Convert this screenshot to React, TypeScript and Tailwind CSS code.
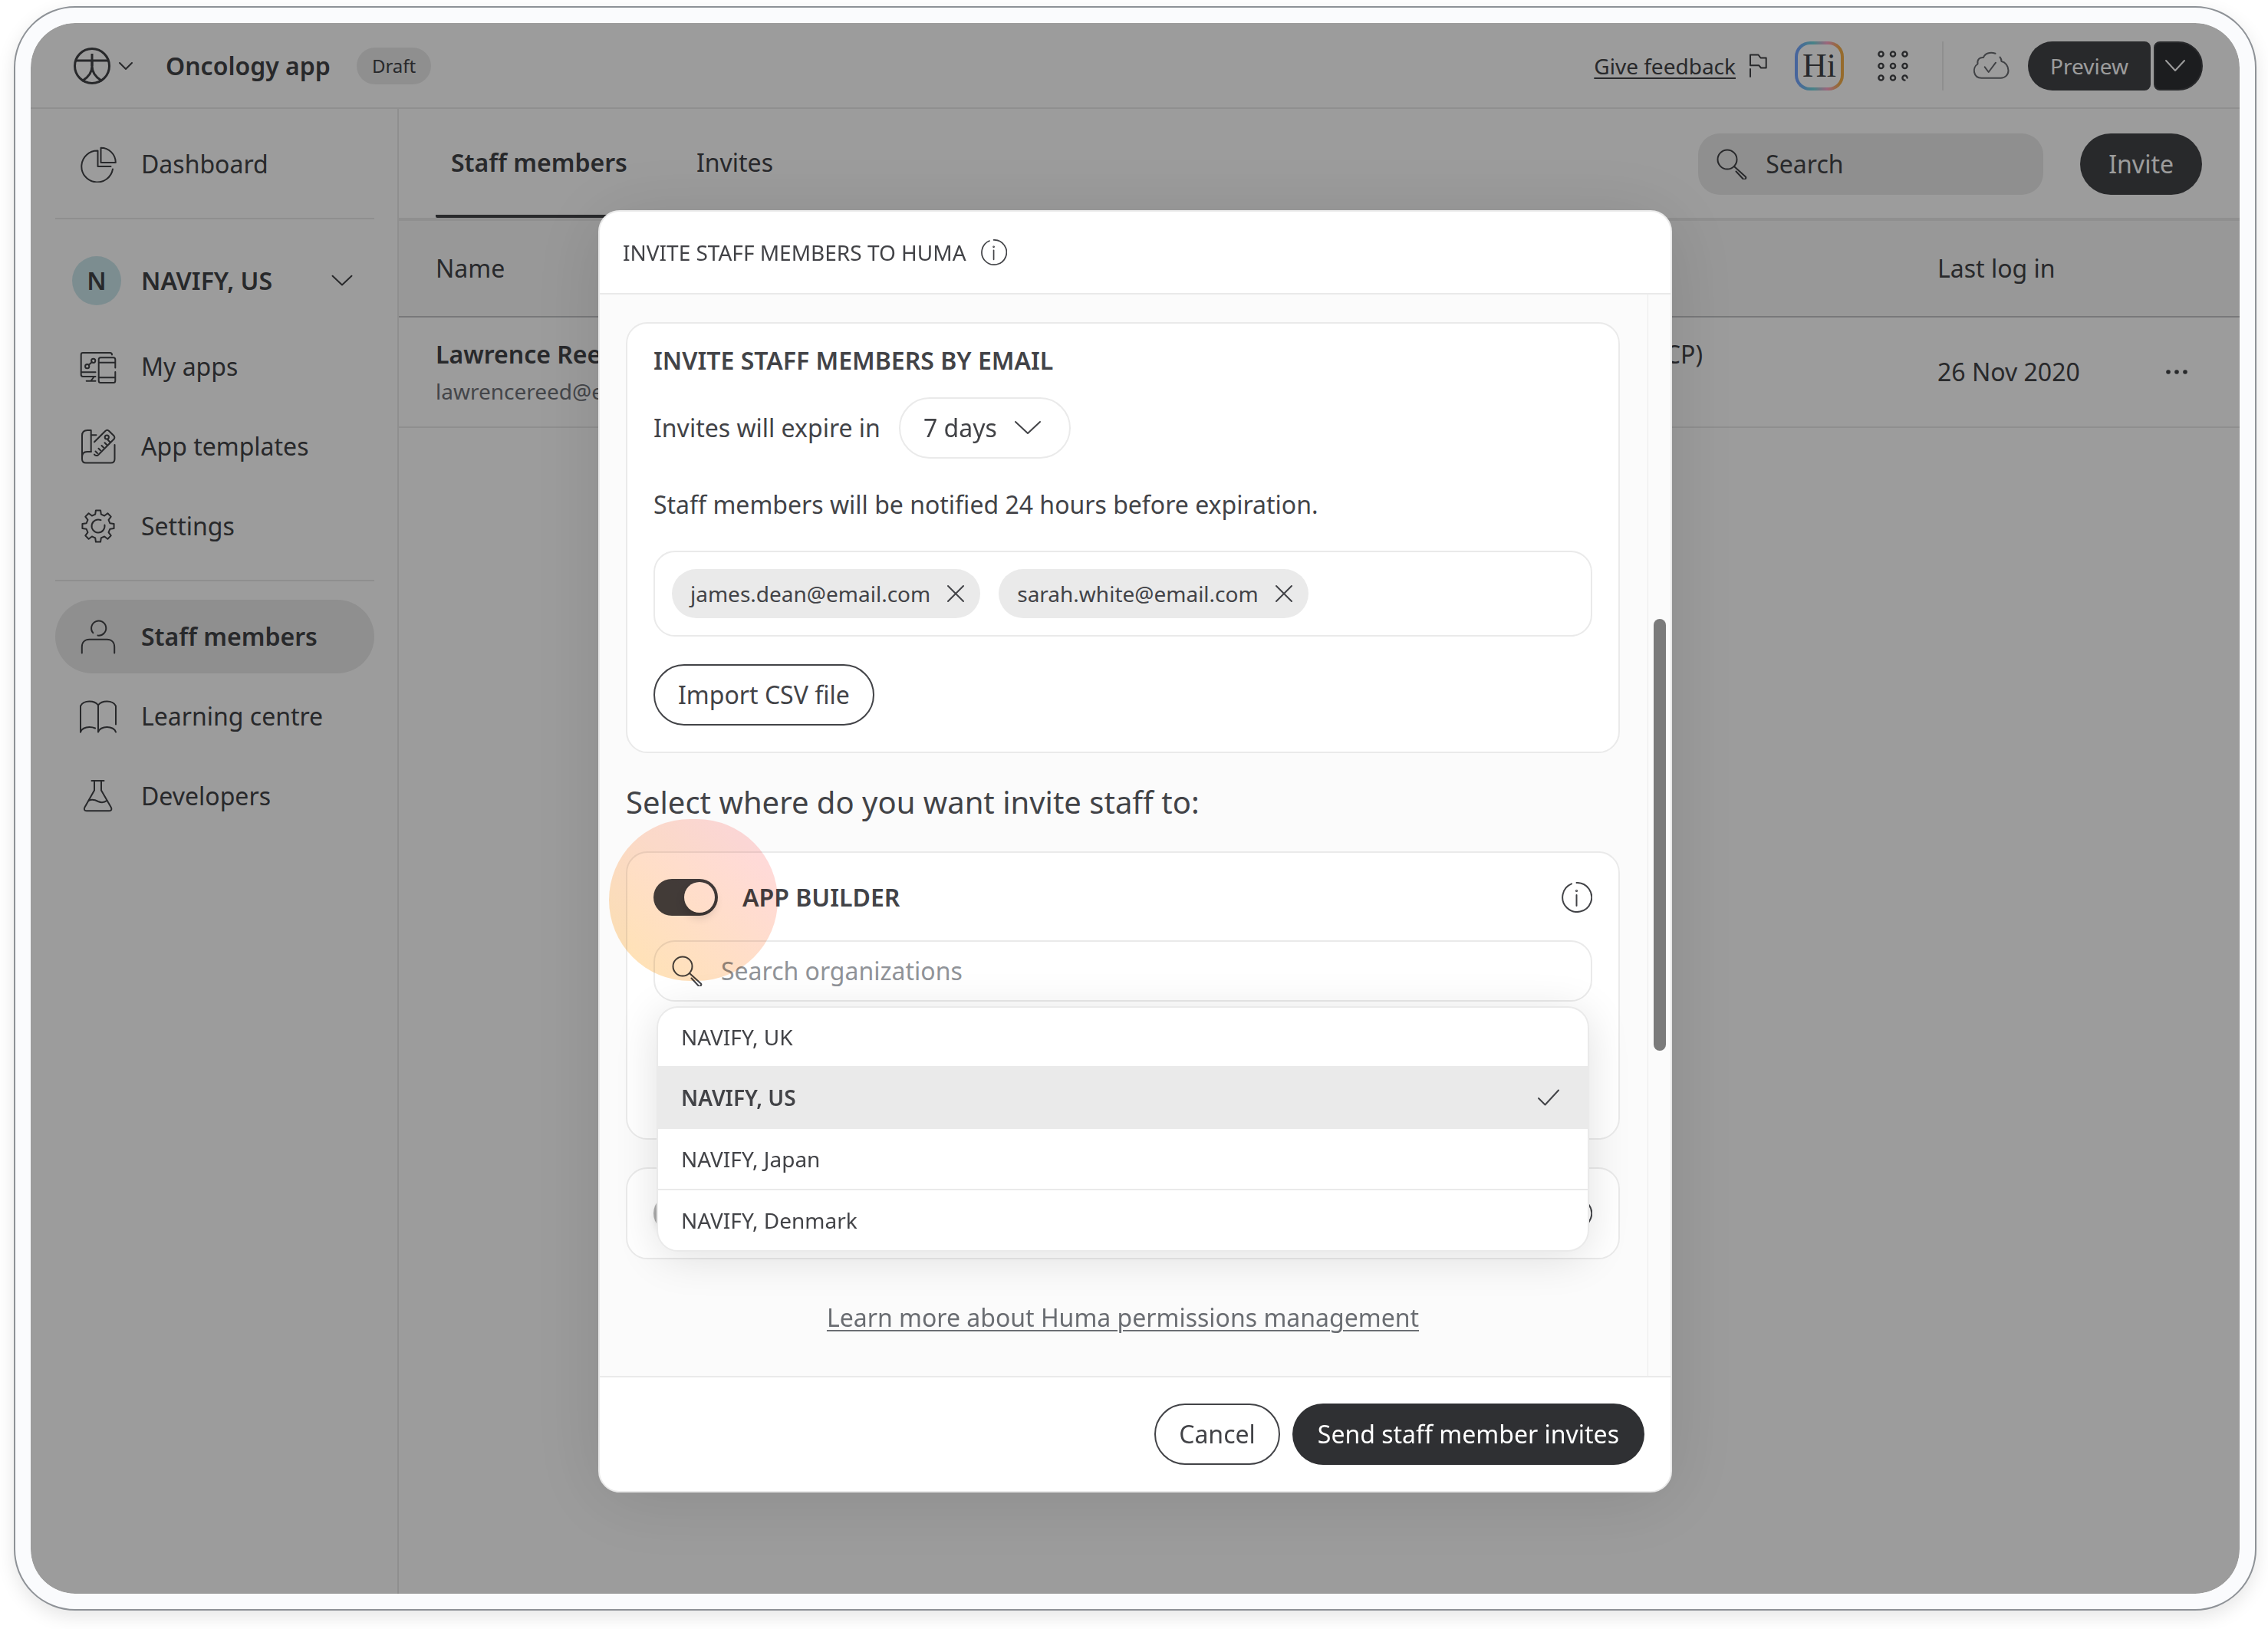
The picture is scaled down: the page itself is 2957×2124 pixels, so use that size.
import { useState, type ReactNode } from "react";

type IconProps = { className?: string };

function Svg({ size, className = "", w = 2, children, height }: { size: number; height?: number; className?: string; w?: number; children: ReactNode }) {
  return (
    <svg
      width={size}
      height={height ?? size}
      viewBox={`0 0 ${size} ${height ?? size}`}
      fill="none"
      stroke="currentColor"
      strokeWidth={w}
      strokeLinecap="round"
      strokeLinejoin="round"
      aria-hidden="true"
      className={`shrink-0 ${className}`}
    >
      {children}
    </svg>
  );
}

const LogoIcon = () => (
  <Svg size={48} w={3}>
    <circle cx="24" cy="24" r="22.5" />
    <path d="M24 8V24M3 17H45" strokeLinecap="butt" />
    <path d="M24 17V24C24 31 20 38 12 43M24 24C24 31 28 38 36 43" />
  </Svg>
);

const Chevron = ({ className }: IconProps) => (
  <Svg size={36} height={20} className={className}>
    <path d="M2 2L18 17L34 2" vectorEffect="non-scaling-stroke" />
  </Svg>
);

const SmallChevron = () => (
  <Svg size={20} height={12}>
    <path d="M2 2L10 10L18 2" />
  </Svg>
);

const PreviewChevron = () => (
  <Svg size={28} height={18}>
    <path d="M2 2L14 15L26 2" />
  </Svg>
);

const SearchIcon = ({ className }: IconProps) => (
  <Svg size={40} className={className}>
    <circle cx="14" cy="14" r="12.5" />
    <path d="M23 23L37.6 36.2A2.1 2.1 0 0 1 34.6 39.2L25.5 29.5" />
  </Svg>
);

const InfoIcon = ({ small = false }: { small?: boolean }) => (
  <svg
    width={small ? 34 : 40}
    height={small ? 34 : 40}
    viewBox="0 0 40 40"
    fill="none"
    stroke="currentColor"
    strokeWidth="2"
    strokeLinecap="round"
    aria-hidden="true"
  >
    <path d="M19.5 1A19 19 0 1 1 13 2.4" />
    <path d="M19.5 17V31" />
    <circle cx="19.5" cy="11.5" r="0.6" />
  </svg>
);

const DashboardIcon = () => (
  <Svg size={48}>
    <path d="M40.5 27H23.5V6.5A20.5 20.5 0 1 0 43 30.5" />
    <path d="M27.5 22V2.7A19.3 19.3 0 0 1 46.8 22Z" />
  </Svg>
);

const AppsIcon = () => (
  <Svg size={48}>
    <path d="M42 8.5C42 7 41 6 39.5 6H4C2.6 6 1.7 7 1.7 8.4V34.6C1.7 36 2.6 37 4 37H20.5M1.7 31.3H20.5M8.7 42.7H20.5M18.5 37.5L14.5 42.5" />
    <path d="M46.3 25.5V14.8C46.3 13.4 45.3 12.3 44 12.3H27C25.7 12.3 24.7 13.4 24.7 14.8V42.5C24.7 44 25.7 45 27 45H44C45.3 45 46.3 44 46.3 42.5V31M24.7 18.7H46.3M24.7 38.3H46.3" />
    <circle cx="9.7" cy="23.7" r="2.6" />
    <circle cx="17.7" cy="16.3" r="2.6" />
    <path d="M11.8 21.8L15.7 18.2" />
  </Svg>
);

const TemplatesIcon = () => (
  <Svg size={48}>
    <path d="M14.7 31V3H10C5.6 3 3 5.6 3 10V40.5C3 43.5 5 45.5 8 45.5H40.5C43.5 45.5 45.5 43.5 45.5 40.5V22" />
    <path d="M14.7 31H9.5C5.5 31 3 33.5 3 38M14.7 9.3H21.5" />
    <path d="M19 18.3L33.3 4C34.7 2.6 36.8 2.6 38.2 4L44.3 10C45.7 11.4 45.7 13.4 44.3 14.8L24 35.2C22.4 36.6 20.4 36.4 19 34.6" />
    <circle cx="35.3" cy="12" r="2.6" />
    <path d="M20.5 30.5L23 33M24.5 26.8L27 29.3M28.5 23L31 25.5M32.5 19.2L35 21.7M36.8 15.8L39.3 18.3" />
  </Svg>
);

const gearPath = (() => {
  const points: string[] = [];
  for (let i = 0; i < 8; i++) {
    const base = i * 45 - 90;
    const corners: [number, number][] = [
      [-14, 15.8],
      [-8.5, 20.8],
      [8.5, 20.8],
      [14, 15.8],
    ];
    corners.forEach(([offset, radius]) => {
      const angle = ((base + offset) * Math.PI) / 180;
      points.push(`${(24 + radius * Math.cos(angle)).toFixed(2)} ${(24 + radius * Math.sin(angle)).toFixed(2)}`);
    });
  }
  return `M${points.join("L")}Z`;
})();

const GearIcon = () => (
  <Svg size={48}>
    <path d={gearPath} />
    <path d="M27.5 16.2A8.5 8.5 0 1 0 32.4 22.5" />
  </Svg>
);

const PersonIcon = () => (
  <Svg size={48}>
    <path d="M17.3 19.2A9.6 9.6 0 1 1 23.5 22.6" />
    <path d="M2.8 45.5V37.5C2.8 31.5 6.5 27.8 12.5 27.8H35.5C41.5 27.8 45.2 31.5 45.2 37.5V45.5" />
  </Svg>
);

const BookIcon = () => (
  <Svg size={48}>
    <path d="M1 44.5V10.5C3 6.5 7.5 4.5 12.5 4.5C17.5 4.5 21.5 6 24 9.5C26.5 6 30.5 4.5 35.5 4.5C40.5 4.5 45 6.5 47 10.5V34.5" />
    <path d="M24 9.5V44.5M1 44.5C2 40.5 7 38 12.5 38C15.5 38 18 38.5 20 39.5M24 44.5C25 40.5 30 38 35.5 38C41 38 46 40.5 47 44.5" />
  </Svg>
);

const FlaskIcon = () => (
  <Svg size={48}>
    <path d="M15.5 4H31.5M19 4V16.5L6.5 38.5C5 41 6 43.3 9 43.3H38.5C41.3 43.3 42.2 41 40.7 38.5L28 16.5V4" />
    <path d="M11.8 30C16 27.5 20 29 24 31C28 32.8 32 32.5 35.5 29.8" />
  </Svg>
);

const FlagIcon = () => (
  <Svg size={28} height={34}>
    <path d="M4 16.3V2.5H14.5L17.5 6.5H24.7V19.5H18L15.3 16.3H4M4 21V31" />
  </Svg>
);

const GridIcon = () => (
  <Svg size={40} w={2.4}>
    {[4.5, 20, 35.5].map((y) =>
      [4.5, 20, 35.5].map((x) =>
        x === 35.5 && y === 35.5 ? (
          <path key="open" d="M35.5 38.6A3.1 3.1 0 1 1 38.6 35.5" />
        ) : (
          <circle key={`${x}-${y}`} cx={x} cy={y} r="3.1" />
        ),
      ),
    )}
  </Svg>
);

const CloudIcon = () => (
  <Svg size={48}>
    <path d="M29.5 7.8C22.5 5 15.5 8 14 13C9 12.3 5.5 16 6.5 21.5C-1 26 .5 39.7 11.5 39.7H36.5C42.5 39.7 46.5 35.5 46.5 30C46.5 24 42.5 19 37.5 18C37.5 16 36.8 14 35.5 12.5" />
    <path d="M15.7 25.3L20.7 32L30 19.7" />
  </Svg>
);

const CloseIcon = () => (
  <Svg size={24}>
    <path d="M2 2L22 22M22 2L2 22" />
  </Svg>
);

const CheckIcon = () => (
  <Svg size={32} height={24}>
    <path d="M2 13L10.5 21.5L28 2.5" />
  </Svg>
);

const DotsIcon = () => (
  <svg width="28" height="8" viewBox="0 0 28 8" fill="currentColor" aria-hidden="true">
    <circle cx="3" cy="4" r="2.8" />
    <circle cx="14" cy="4" r="2.8" />
    <circle cx="25" cy="4" r="2.8" />
  </svg>
);

function NavItem({ icon, label, active = false }: { icon: ReactNode; label: string; active?: boolean }) {
  return (
    <a
      href="#"
      aria-current={active ? "page" : undefined}
      className={`flex h-24 items-center gap-8 rounded-full pl-8 ${active ? "bg-[#eaeaea] font-semibold" : ""}`}
    >
      {icon}
      {label}
    </a>
  );
}

function Sidebar() {
  return (
    <nav className="w-[480px] shrink-0 border-r-2 border-[#eaeaea] pt-6 pr-[30px] pl-8">
      <NavItem icon={<DashboardIcon />} label="Dashboard" />
      <hr className="mt-[22px] mb-6 border-t-2 border-[#eaeaea]" />
      <button className="mb-2 flex h-28 w-full items-center pr-7 pl-[22px] font-semibold">
        <span className="mr-[26px] flex size-16 items-center justify-center rounded-full bg-[#cbe7ec]">N</span>
        NAVIFY, US
        <Chevron className="ml-auto h-4 w-7" />
      </button>
      <div className="flex flex-col gap-2">
        <NavItem icon={<AppsIcon />} label="My apps" />
        <NavItem icon={<TemplatesIcon />} label="App templates" />
        <NavItem icon={<GearIcon />} label="Settings" />
      </div>
      <hr className="mt-[22px] mb-6 border-t-2 border-[#eaeaea]" />
      <div className="flex flex-col gap-2">
        <NavItem icon={<PersonIcon />} label="Staff members" active />
        <NavItem icon={<BookIcon />} label="Learning centre" />
        <NavItem icon={<FlaskIcon />} label="Developers" />
      </div>
    </nav>
  );
}

function Header() {
  return (
    <header className="flex h-28 items-center border-b-2 border-[#eaeaea] pt-0.5 pr-12 pl-14">
      <button aria-label="Switch workspace" className="flex items-center gap-2.5">
        <LogoIcon />
        <SmallChevron />
      </button>
      <h1 className="ml-[42px] font-semibold">Oncology app</h1>
      <span className="ml-[34px] flex h-12 items-center rounded-full bg-[#eaeaea] px-5 text-2xl">Draft</span>
      <a href="#" className="ml-auto flex items-center gap-[15px] text-[28px]">
        <span className="underline decoration-2 underline-offset-4">Give feedback</span>
        <FlagIcon />
      </a>
      <button
        aria-label="Huma intelligence"
        className="ml-[34px] size-16 rounded-[20px] bg-[linear-gradient(90deg,#75a5ff_5%,#74d6dc_38%,#ffa6cb_66%,#f5b04a_92%)] p-1"
      >
        <span className="flex size-full items-center justify-center rounded-2xl bg-white font-['Liberation_Serif',serif] text-[44px]">
          Hi
        </span>
      </button>
      <button aria-label="Apps" className="ml-11">
        <GridIcon />
      </button>
      <span className="ml-11 h-16 w-0.5 bg-[#eaeaea]" />
      <span className="ml-[38px] text-[#6a6d72]">
        <CloudIcon />
      </span>
      <button className="ml-6 h-16 w-40 rounded-l-[32px] rounded-r-lg bg-[#424347] text-[28px] text-white">Preview</button>
      <button
        aria-label="Preview options"
        className="ml-1 flex size-16 items-center justify-center rounded-l-lg rounded-r-[32px] border-2 border-[#424347] bg-[#2f3033] pr-2 text-white"
      >
        <PreviewChevron />
      </button>
    </header>
  );
}

function StaffPage() {
  return (
    <main className="min-w-0 flex-1">
      <div className="flex h-[146px] items-center border-b-4 border-[#eaeaea] pt-0.5 pr-[49px] pl-12">
        <div role="tablist" className="flex h-full gap-[50px]">
          <button role="tab" aria-selected="true" className="h-full rounded-b-xs border-b-4 border-[#424347] px-5 font-semibold">
            Staff members
          </button>
          <button role="tab" aria-selected="false" className="h-full border-b-4 border-transparent px-5">
            Invites
          </button>
        </div>
        <label className="ml-auto flex h-20 w-[450px] items-center gap-6 rounded-[28px] bg-[#eaeaea] pl-6">
          <SearchIcon />
          <input
            type="search"
            aria-label="Search staff members"
            placeholder="Search"
            className="min-w-0 flex-1 bg-transparent outline-none placeholder:text-[#424347]"
          />
        </label>
        <button className="ml-12 h-20 rounded-full bg-[#424347] px-[37px] text-white">Invite</button>
      </div>
      <table className="w-full table-fixed text-left">
        <colgroup>
          <col className="w-[900px]" />
          <col />
          <col className="w-[230px]" />
          <col className="w-[164px]" />
        </colgroup>
        <thead>
          <tr className="h-[125px] border-b-2 border-[#c4c5c8] bg-[#f8f8f8]">
            <th scope="col" className="pl-12 font-normal">Name</th>
            <th scope="col" className="font-normal" />
            <th scope="col" className="font-normal">Last log in</th>
            <th scope="col" />
          </tr>
        </thead>
        <tbody>
          <tr className="border-b-2 border-[#eaeaea]">
            <td className="pt-6 pb-[22px] pl-12">
              <div className="font-semibold">Lawrence Reed</div>
              <div className="text-[28px] leading-[48px] text-[#6f7278]">lawrencereed@email.com</div>
            </td>
            <td className="pt-6 pr-[306px] text-right align-top">Healthcare professional (HCP)</td>
            <td>26 Nov 2020</td>
            <td>
              <button aria-label="More actions" className="mx-auto flex">
                <DotsIcon />
              </button>
            </td>
          </tr>
        </tbody>
      </table>
    </main>
  );
}

function Chip({ email, onRemove }: { email: string; onRemove: () => void }) {
  return (
    <span className="flex h-16 items-center gap-[21px] rounded-full bg-[#eaeaea] pr-5 pl-6 text-[28px]">
      {email}
      <button aria-label={`Remove ${email}`} onClick={onRemove}>
        <CloseIcon />
      </button>
    </span>
  );
}

const toggleClass =
  "flex h-12 w-[84px] appearance-none items-center rounded-full bg-[#b4b4b4] p-1 before:size-10 before:rounded-full before:bg-white before:shadow-[0_6px_12px_rgba(0,0,0,0.16)] checked:justify-end checked:bg-[#424347]";

const organizations = ["NAVIFY, UK", "NAVIFY, US", "NAVIFY, Japan", "NAVIFY, Denmark"];

function InviteDialog() {
  const [emails, setEmails] = useState(["james.dean@email.com", "sarah.white@email.com"]);
  const [builder, setBuilder] = useState(true);
  const [portal, setPortal] = useState(false);
  const [selected, setSelected] = useState("NAVIFY, US");

  return (
    <section
      role="dialog"
      aria-modal="true"
      aria-labelledby="dialog-title"
      className="flex w-[1400px] max-w-full flex-col overflow-hidden rounded-[28px] border-2 border-[#eaeaea] bg-white shadow-[0_8px_100px_rgba(0,0,0,0.12)]"
    >
      <header className="flex h-[108px] items-center gap-[19px] border-b-2 border-[#eaeaea] px-[30px]">
        <h2 id="dialog-title" className="text-[28px]">INVITE STAFF MEMBERS TO HUMA</h2>
        <button aria-label="About invitations">
          <InfoIcon small />
        </button>
      </header>

      <div className="flex bg-[#fbfbfb]">
        <div className="min-w-0 flex-1 pt-9 pr-9 pl-[34px]">
          <div className="rounded-[28px] border-2 border-[#eaeaea] bg-white px-[34px] pt-6 pb-[34px]">
            <h3 className="font-semibold">INVITE STAFF MEMBERS BY EMAIL</h3>
            <div className="mt-6 flex items-center gap-6">
              <label htmlFor="expiry">Invites will expire in</label>
              <div className="relative">
                <select id="expiry" className="h-20 w-56 appearance-none rounded-full border-2 border-[#eaeaea] bg-white pl-[30px]">
                  <option>7 days</option>
                  <option>14 days</option>
                  <option>30 days</option>
                </select>
                <Chevron className="pointer-events-none absolute top-[30px] right-[38px]" />
              </div>
            </div>
            <p className="mt-9">Staff members will be notified 24 hours before expiration.</p>
            <div className="mt-9 flex h-28 items-center gap-6 rounded-[28px] border-2 border-[#eaeaea] px-[22px]">
              {emails.map((email) => (
                <Chip key={email} email={email} onRemove={() => setEmails(emails.filter((e) => e !== email))} />
              ))}
              <input type="email" aria-label="Add an email address" className="h-16 min-w-0 flex-1 outline-none" />
            </div>
            <button className="mt-9 h-20 rounded-full border-2 border-[#424347] px-[30px]">Import CSV file</button>
          </div>

          <h3 className="my-9 text-[40px] leading-[56px]">Select where do you want invite staff to:</h3>

          <div className="relative rounded-[28px] border-2 border-[#eaeaea] bg-white px-[34px] pt-[34px] pb-[178px]">
            <div className="flex h-12 items-center justify-between">
              <label className="flex items-center gap-8 font-semibold">
                <input
                  type="checkbox"
                  role="switch"
                  checked={builder}
                  onChange={() => setBuilder(!builder)}
                  className={toggleClass}
                />
                APP BUILDER
              </label>
              <button aria-label="About App Builder">
                <InfoIcon />
              </button>
            </div>
            <div className="relative mt-8">
              <label className="flex h-20 items-center gap-6 rounded-[28px] border-2 border-[#eaeaea] px-[22px]">
                <SearchIcon />
                <input
                  type="text"
                  role="combobox"
                  aria-expanded="true"
                  aria-controls="organizations"
                  aria-label="Search organizations"
                  placeholder="Search organizations"
                  className="min-w-0 flex-1 bg-transparent outline-none placeholder:text-[#909398]"
                />
              </label>
              <ul
                id="organizations"
                role="listbox"
                aria-label="Organizations"
                className="absolute top-full right-1 left-1 z-10 mt-1.5 overflow-hidden rounded-[28px] border-2 border-[#eaeaea] bg-white text-[28px] shadow-[0_8px_56px_rgba(0,0,0,0.12)]"
              >
                {organizations.map((name) => (
                  <li
                    key={name}
                    role="option"
                    aria-selected={name === selected}
                    className="h-20 border-b-2 border-[#eaeaea] first:h-[78px] last:h-[78px] last:border-b-0"
                  >
                    <button
                      onClick={() => setSelected(name)}
                      className={`flex size-full items-center justify-between pr-[34px] pl-[30px] ${name === selected ? "bg-[#eaeaea] font-semibold" : ""}`}
                    >
                      {name}
                      {name === selected && <CheckIcon />}
                    </button>
                  </li>
                ))}
              </ul>
            </div>
            <span className="pointer-events-none absolute -top-11 -left-6 h-[211px] w-[220px] rounded-full bg-linear-to-tr from-[#ffe3b0] to-[#ffd8e0] mix-blend-multiply" />
          </div>

          <div className="mt-9 flex h-[120px] items-center justify-between rounded-[28px] border-2 border-[#eaeaea] bg-white px-[34px]">
            <input
              type="checkbox"
              role="switch"
              aria-label="Clinician portal"
              checked={portal}
              onChange={() => setPortal(!portal)}
              className={toggleClass}
            />
            <button aria-label="About Clinician Portal">
              <InfoIcon />
            </button>
          </div>

          <p className="my-[52px] text-center">
            <a href="#" className="text-[#6a6d72] underline decoration-2 underline-offset-4">
              Learn more about Huma permissions management
            </a>
          </p>
        </div>
        <div aria-hidden="true" className="w-[30px] border-l border-[#eaeaea] pt-[423px] pl-[7px]">
          <div className="h-[563px] w-4 rounded-full bg-[#7b7b7b]" />
        </div>
      </div>

      <footer className="flex justify-end gap-4 border-t-2 border-[#eaeaea] px-[34px] py-[34px]">
        <button className="h-20 rounded-full border-2 border-[#424347] px-[30px]">Cancel</button>
        <button className="h-20 rounded-full bg-[#2f3033] px-[33px] text-white">Send staff member invites</button>
      </footer>
    </section>
  );
}

export default function App() {
  return (
    <div className="flex min-h-screen flex-col bg-white pt-2 pr-[15px] pb-6 pl-[18px] font-['Noto_Sans',sans-serif] text-[32px] leading-[48px] text-[#424347]">
      <div className="flex flex-1 flex-col rounded-[80px] border-2 border-[#8e9297] bg-[#fafbfd] p-5 shadow-[0_8px_24px_rgba(0,0,0,0.1)]">
        <div className="grid flex-1 overflow-hidden rounded-[58px] bg-white">
          <div className="col-start-1 row-start-1 flex min-w-0 flex-col">
            <Header />
            <div className="flex flex-1">
              <Sidebar />
              <StaffPage />
            </div>
          </div>
          <div className="z-20 col-start-1 row-start-1 flex items-start justify-center bg-black/39 pt-[244px] pb-[132px]">
            <InviteDialog />
          </div>
        </div>
      </div>
    </div>
  );
}
